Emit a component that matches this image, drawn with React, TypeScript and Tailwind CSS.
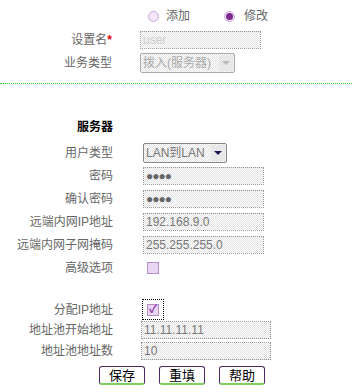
const font = { fontFamily: '"Liberation Sans", "Noto Sans CJK SC", sans-serif' };

const dotted =
  'bg-[repeating-conic-gradient(#e2e2e2_0_25%,#ffffff_0_50%)] bg-[length:2px_2px] border border-dotted border-[#999]';

function Field({ value, w = 'w-[121px]', color = 'text-[#777]' }: { value: string; w?: string; color?: string }) {
  return (
    <div className={`${dotted} ${w} h-[18px] flex items-center px-[2px] text-[12px] leading-none ${color}`}>
      {value}
    </div>
  );
}

function Select({ value, w, disabled }: { value: string; w: string; disabled?: boolean }) {
  return (
    <div
      className={`${w} h-[20px] flex items-center rounded-[2px] border ${
        disabled ? 'border-[#aaa]' : 'border-[#888]'
      } bg-[repeating-conic-gradient(#e2e2e2_0_25%,#ffffff_0_50%)] bg-[length:2px_2px] pl-[2px]`}
    >
      <span className={`flex-1 text-[12px] leading-none ${disabled ? 'text-[#aaa]' : 'text-[#777]'}`}>{value}</span>
      <span className="w-[14px] h-[16px] flex items-center justify-center mr-[1px] bg-[#e8e8e8]">
        <span
          className={`w-0 h-0 border-l-[4px] border-r-[4px] border-t-[4px] border-l-transparent border-r-transparent ${
            disabled ? 'border-t-[#bbb]' : 'border-t-[#1a1a5a]'
          }`}
        />
      </span>
    </div>
  );
}

function Row({ label, children, h = 'h-[18px]', mt = 'mt-[5px]' }: { label: React.ReactNode; children: React.ReactNode; h?: string; mt?: string }) {
  return (
    <div className={`flex items-center ${h} ${mt}`}>
      <div className="w-[113px] text-right text-[12px] text-[#666] leading-none whitespace-nowrap">{label}</div>
      <div className="ml-[30px] flex items-center">{children}</div>
    </div>
  );
}

function Radio({ checked }: { checked?: boolean }) {
  return (
    <span className="w-[11px] h-[11px] rounded-full border border-[#c9a6dd] bg-[#f4e8f8] flex items-center justify-center">
      {checked && <span className="w-[7px] h-[7px] rounded-full bg-[#7a2a8a]" />}
    </span>
  );
}

function Check({ checked }: { checked?: boolean }) {
  return (
    <span className="w-[12px] h-[12px] border border-[#b48fcb] bg-[#ead4f4] flex items-center justify-center text-[11px] leading-none text-[#8a3aa0] font-bold">
      {checked ? '✓' : ''}
    </span>
  );
}

function Btn({ children }: { children: React.ReactNode }) {
  return (
    <button className="w-[46px] h-[19px] rounded-[3px] border border-[#4a2a6a] bg-white border-b-[2px] border-b-[#7ccf5a] text-[13px] leading-none text-black flex items-center justify-center">
      {children}
    </button>
  );
}

export default function App() {
  return (
    <div className="w-[352px] h-[392px] bg-white overflow-hidden relative" style={font}>
      <div className="flex items-center h-[14px] mt-[9px] ml-[148px] text-[12px] text-[#666] leading-none">
        <Radio />
        <span className="ml-[7px]">添加</span>
        <span className="ml-[34px]"><Radio checked /></span>
        <span className="ml-[9px]">修改</span>
      </div>
      <div className="ml-[-1px]">
        <Row label={<>设置名<span className="text-red-600 font-bold">*</span></>} mt="mt-[8px]">
          <span className="ml-[-2px]">
            <Field value="user" color="text-[#ccc]" />
          </span>
        </Row>
        <Row label="业务类型" h="h-[20px]" mt="mt-[4px]">
          <span className="ml-[-2px]">
            <Select value="拨入(服务器)" w="w-[95px]" disabled />
          </span>
        </Row>
      </div>
      <div className="mt-[10px] border-t border-dotted border-[#2bd02b]" />
      <div className="mt-[37px] w-[113px] text-right text-[12px] font-bold text-black leading-none">服务器</div>
      <Row label="用户类型" h="h-[20px]" mt="mt-[10px]">
        <Select value="LAN到LAN" w="w-[84px]" />
      </Row>
      <Row label="密码" mt="mt-[4px]">
        <Field value="●●●●" color="text-[#666] text-[9px] tracking-[-1px]" />
      </Row>
      <Row label="确认密码">
        <Field value="●●●●" color="text-[#666] text-[9px] tracking-[-1px]" />
      </Row>
      <Row label="远端内网IP地址">
        <Field value="192.168.9.0" />
      </Row>
      <Row label="远端内网子网掩码">
        <Field value="255.255.255.0" />
      </Row>
      <Row label="高级选项" h="h-[12px]" mt="mt-[8px]">
        <span className="ml-[4px]"><Check /></span>
      </Row>
      <Row label="分配IP地址" h="h-[21px]" mt="mt-[25px]">
        <span className="ml-[-1px] w-[22px] h-[21px] border border-dotted border-black flex items-center justify-center">
          <Check checked />
        </span>
      </Row>
      <Row label="地址池开始地址" mt="mt-[1px]">
        <span className="ml-[-2px]"><Field value="11.11.11.11" w="w-[130px]" /></span>
      </Row>
      <Row label="地址池地址数" mt="mt-[3px]">
        <span className="ml-[-2px]"><Field value="10" w="w-[130px]" /></span>
      </Row>
      <div className="flex gap-[14px] ml-[99px] mt-[6px]">
        <Btn>保存</Btn>
        <Btn>重填</Btn>
        <Btn>帮助</Btn>
      </div>
    </div>
  );
}
